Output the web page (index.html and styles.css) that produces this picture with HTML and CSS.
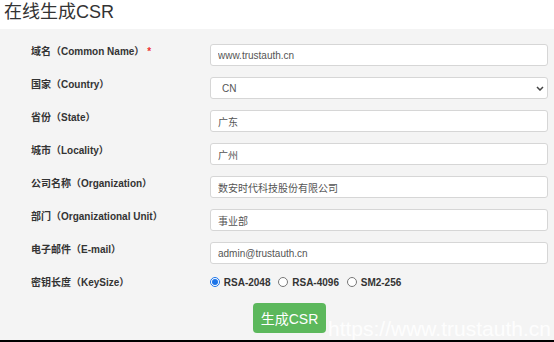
FILE: index.html
```html
<!DOCTYPE html>
<html lang="zh">
<head>
  <meta charset="UTF-8">
  <title>在线生成CSR</title>
  <link rel="stylesheet" href="styles.css">
</head>
<body>
  <h1 class="titre">在线生成CSR</h1>
  <div class="panneau">
    <div class="ligne">
      <label>域名（Common Name）<span class="requis">*</span></label>
      <input type="text" value="www.trustauth.cn">
    </div>
    <div class="ligne">
      <label>国家（Country）</label>
      <div class="liste">
        <select>
          <option>CN</option>
        </select>
        <svg class="chevron" width="8" height="5" viewBox="0 0 8 5"><path d="M1 1l3 3 3-3" fill="none" stroke="#444" stroke-width="1.5"/></svg>
      </div>
    </div>
    <div class="ligne">
      <label>省份（State）</label>
      <input type="text" value="广东">
    </div>
    <div class="ligne">
      <label>城市（Locality）</label>
      <input type="text" value="广州">
    </div>
    <div class="ligne">
      <label>公司名称（Organization）</label>
      <input type="text" value="数安时代科技股份有限公司">
    </div>
    <div class="ligne">
      <label>部门（Organizational Unit）</label>
      <input type="text" value="事业部">
    </div>
    <div class="ligne">
      <label>电子邮件（E-mail）</label>
      <input type="text" value="admin@trustauth.cn">
    </div>
    <div class="ligne ligne-radio">
      <label>密钥长度（KeySize）</label>
      <div class="choix">
        <span class="option"><input type="radio" name="taille" checked> RSA-2048</span>
        <span class="option"><input type="radio" name="taille"> RSA-4096</span>
        <span class="option"><input type="radio" name="taille"> SM2-256</span>
      </div>
    </div>
    <div class="actions">
      <button>生成CSR</button>
    </div>
    <div class="filigrane">https://www.trustauth.cn</div>
  </div>
</body>
</html>
```

FILE: styles.css
```css
body {
  margin: 0;
  background: #fff;
  font-family: "Liberation Sans", Arial, "Noto Sans CJK SC", sans-serif;
  color: #333;
}
.titre {
  margin: 0;
  height: 29px;
  padding-left: 4px;
  font-size: 18px;
  font-weight: normal;
  line-height: 24px;
  color: #333;
}
.panneau {
  position: relative;
  overflow: hidden;
  background: #f4f4f4;
  padding: 15px 6px 7px 31px;
  border-bottom: 2px solid #000;
  height: 289px;
}
.ligne {
  display: grid;
  grid-template-columns: 179px 338px;
  height: 22px;
  margin-bottom: 11px;
}
.ligne label {
  font-size: 10px;
  font-weight: bold;
  line-height: 14px;
  padding-top: 1px;
  color: #333;
}
.requis {
  color: #e33;
  margin-left: 3px;
}
input[type="text"], select {
  box-sizing: border-box;
  height: 22px;
  border: 1px solid #d6d6d6;
  border-radius: 3px;
  background: #fff;
  font-family: "Liberation Sans", Arial, "Noto Sans CJK SC", sans-serif;
  font-size: 10px;
  color: #555;
  padding: 0 7px;
}
.liste {
  position: relative;
  display: flex;
}
select {
  flex: 1;
  appearance: none;
  padding-left: 11px;
}
.chevron {
  position: absolute;
  right: 4px;
  top: 9px;
}
.ligne-radio {
  height: 16px;
  margin-bottom: 12px;
}
.choix {
  display: flex;
  gap: 8px;
  font-size: 10px;
  font-weight: bold;
  line-height: 16px;
}
.option input {
  width: 10px;
  height: 10px;
  margin: 0 1px 0 0;
  vertical-align: -1px;
  accent-color: #1a73e8;
}
.actions {
  padding-left: 222px;
}
button {
  width: 73px;
  height: 30px;
  border: none;
  border-radius: 4px;
  background: #5cb85c;
  color: #fff;
  font-family: "Liberation Sans", Arial, "Noto Sans CJK SC", sans-serif;
  font-size: 14px;
}
.filigrane {
  position: absolute;
  left: 328px;
  bottom: -1px;
  font-size: 21px;
  color: rgba(255, 255, 255, 0.92);
  white-space: nowrap;
}
```
